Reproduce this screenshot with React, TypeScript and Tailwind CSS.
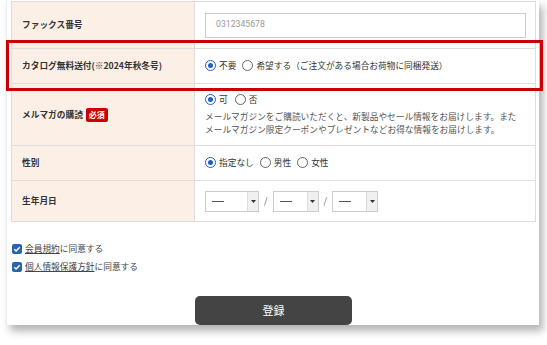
import React from 'react';

const jp = { fontFamily: '"Noto Sans CJK JP", "Noto Sans", sans-serif' };

const Radio = ({ checked, label }: { checked?: boolean; label: string }) => (
  <span className="flex items-center gap-[3px]">
    <span
      className={`flex h-[11px] w-[11px] items-center justify-center rounded-full border bg-white ${
        checked ? 'border-[#1f5fbf]' : 'border-[#666]'
      }`}
    >
      {checked && <span className="h-[5px] w-[5px] rounded-full bg-[#1f5fbf]" />}
    </span>
    <span className="text-[8.7px] text-[#333]">{label}</span>
  </span>
);

const Select = ({ wide }: { wide?: boolean }) => (
  <div className={`flex h-[21px] border border-[#ccc] bg-white ${wide ? 'w-[54px]' : 'w-[46px]'}`}>
    <div className="flex flex-1 items-center pl-[6px]">
      <span className="h-px w-[12px] bg-[#555]" />
    </div>
    <div className="flex w-[11px] items-center justify-center border-l border-[#ddd] bg-[#f0f0f0]">
      <svg width="5" height="3" viewBox="0 0 5 3">
        <path d="M0 0h5L2.5 3z" fill="#333" />
      </svg>
    </div>
  </div>
);

const Check = () => (
  <span className="flex h-[10px] w-[10px] items-center justify-center rounded-[2px] bg-[#2a64b0]">
    <svg width="8" height="8" viewBox="0 0 8 8">
      <path d="M1.3 4.2l1.8 1.8 3.6-3.8" fill="none" stroke="#fff" strokeWidth="1.4" />
    </svg>
  </span>
);

const Row = ({
  label,
  h,
  children,
}: {
  label: React.ReactNode;
  h: string;
  children: React.ReactNode;
}) => (
  <div className={`flex border-b border-[#ddd] ${h}`}>
    <div className="flex w-[183px] shrink-0 items-center border-r border-[#ddd] bg-[#fcefe5] pl-[10px] text-[8.7px] font-bold text-[#333]">
      {label}
    </div>
    <div className="flex flex-1 items-center px-[10px]">{children}</div>
  </div>
);

export default function App() {
  return (
    <div className="relative h-[345px] w-[547px] overflow-hidden bg-white" style={jp}>
      {/* Card */}
      <div className="ml-[6px] flex h-[325px] w-[533px] flex-col border-l border-[#eee] bg-white pl-[4px] shadow-[4px_6px_8px_rgba(0,0,0,0.3)]">
        <div className="mt-[1px] w-[525px] border-x border-t border-[#ddd]">
          <Row label="ファックス番号" h="h-[47px]">
            <div className="flex h-[25px] w-[321px] items-center border border-[#ccc] pl-[10px] text-[8.7px] text-[#999]" style={{ fontFamily: 'Roboto, sans-serif' }}>
              0312345678
            </div>
          </Row>
          <Row label="カタログ無料送付(※2024年秋冬号)" h="h-[35px]">
            <div className="flex items-center gap-[6px]">
              <Radio checked label="不要" />
              <Radio label="希望する（ご注文がある場合お荷物に同梱発送）" />
            </div>
          </Row>
          <Row
            label={
              <span className="flex items-center gap-[3px]">
                メルマガの購読
                <span className="rounded-[2px] bg-[#cc0000] px-[3px] py-px text-[8px] font-bold text-white">必須</span>
              </span>
            }
            h="h-[62px]"
          >
            <div className="flex flex-col">
              <div className="flex items-center gap-[7px]">
                <Radio checked label="可" />
                <Radio label="否" />
              </div>
              <p className="mt-[3px] text-[8.7px] leading-[13px] text-[#555]">
                メールマガジンをご購読いただくと、新製品やセール情報をお届けします。また
                <br />
                メールマガジン限定クーポンやプレゼントなどお得な情報をお届けします。
              </p>
            </div>
          </Row>
          <Row label="性別" h="h-[35px]">
            <div className="flex items-center gap-[6px]">
              <Radio checked label="指定なし" />
              <Radio label="男性" />
              <Radio label="女性" />
            </div>
          </Row>
          <Row label="生年月日" h="h-[41px]">
            <div className="flex items-center gap-[5px] text-[9px] text-[#666]">
              <Select wide />
              <span>/</span>
              <Select />
              <span>/</span>
              <Select />
            </div>
          </Row>
        </div>

        {/* Agreements */}
        <div className="mt-[20px] flex flex-col gap-[5px] pl-[1px] text-[8.7px] text-[#444]">
          <div className="flex items-center gap-[3px]">
            <Check />
            <span>
              <span className="underline">会員規約</span>に同意する
            </span>
          </div>
          <div className="flex items-center gap-[3px]">
            <Check />
            <span>
              <span className="underline">個人情報保護方針</span>に同意する
            </span>
          </div>
        </div>

        {/* Submit */}
        <div className="mt-auto flex justify-center pr-[3px]">
          <button className="h-[29px] w-[157px] rounded-[5px] bg-[#444] text-[11px] text-white">登録</button>
        </div>
      </div>

      {/* Highlight annotation */}
      <div className="absolute left-[6px] top-[40px] h-[51px] w-[537px] border-[3px] border-[#cc0000]" />
    </div>
  );
}
